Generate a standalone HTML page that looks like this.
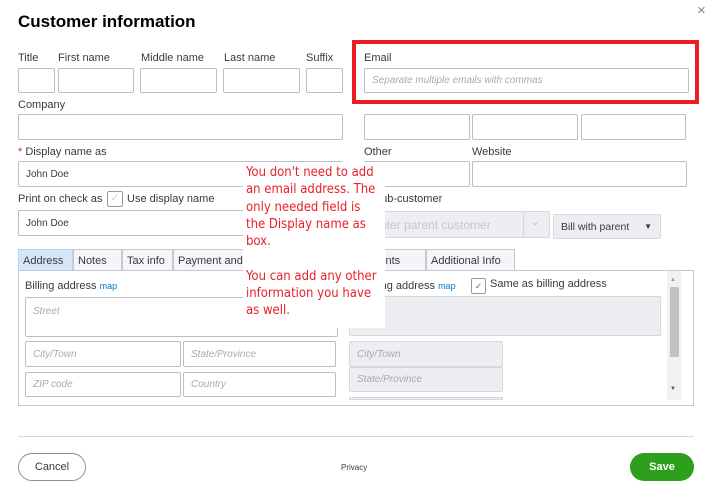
<!DOCTYPE html>
<html><head><style>
*{box-sizing:border-box;margin:0;padding:0}
body{width:710px;height:492px;background:#fff;font-family:"Liberation Sans",sans-serif;position:relative;overflow:hidden;color:#393a3d}
.a{position:absolute}
.l{position:absolute;font-size:11px;color:#393a3d;white-space:nowrap}
.i{position:absolute;border:1px solid #babec5;border-radius:2px;background:#fff;font-size:10px;color:#aaa;font-style:italic;padding:0 7px;display:flex;align-items:center;white-space:nowrap}
.g{background:#eceef1;border-color:#d4d7dc}
.t{position:absolute;top:249px;height:21px;border:1px solid #c5c8cc;border-bottom:none;background:#f4f5f8;font-size:11px;padding:5px 4px 0;color:#393a3d;white-space:nowrap;overflow:hidden}
.n{position:absolute;left:246px;font-size:13px;color:#e8202a;line-height:17.3px;font-family:"DejaVu Sans Condensed","Liberation Sans Narrow","Liberation Sans",sans-serif;white-space:nowrap}
</style></head><body>
<div class="a" style="left:18px;top:12px;font-size:17px;font-weight:bold;color:#000">Customer information</div>
<div class="a" style="left:697px;top:2px;font-size:15px;color:#888">×</div>

<div class="l" style="left:18px;top:52px">Title</div>
<div class="l" style="left:58px;top:52px">First name</div>
<div class="l" style="left:141px;top:52px">Middle name</div>
<div class="l" style="left:224px;top:52px">Last name</div>
<div class="l" style="left:306px;top:52px">Suffix</div>
<div class="i" style="left:18px;top:68px;width:37px;height:25px"></div>
<div class="i" style="left:58px;top:68px;width:76px;height:25px"></div>
<div class="i" style="left:140px;top:68px;width:77px;height:25px"></div>
<div class="i" style="left:223px;top:68px;width:77px;height:25px"></div>
<div class="i" style="left:306px;top:68px;width:37px;height:25px"></div>

<div class="l" style="left:18px;top:99px">Company</div>
<div class="i" style="left:18px;top:114px;width:325px;height:26px"></div>
<div class="l" style="left:18px;top:146px"><span style="color:#d52b1e">*</span> Display name as</div>
<div class="i" style="left:18px;top:161px;width:325px;height:26px;font-style:normal;color:#393a3d">John Doe</div>
<div class="l" style="left:18px;top:193px">Print on check as</div>
<div class="a" style="left:107px;top:191px;width:16px;height:16px;border:1px solid #999;border-radius:2px;color:#ccc;font-size:10px;text-align:center;line-height:14px">✓</div>
<div class="l" style="left:127px;top:193px">Use display name</div>
<div class="i" style="left:18px;top:210px;width:325px;height:26px;font-style:normal;color:#393a3d">John Doe</div>

<div class="a" style="left:352px;top:40px;width:347px;height:64px;border:4px solid #ed1c24"></div>
<div class="l" style="left:364px;top:52px">Email</div>
<div class="i" style="left:364px;top:68px;width:325px;height:25px">Separate multiple emails with commas</div>
<div class="i" style="left:364px;top:114px;width:106px;height:26px"></div>
<div class="i" style="left:472px;top:114px;width:106px;height:26px"></div>
<div class="i" style="left:581px;top:114px;width:105px;height:26px"></div>
<div class="l" style="left:364px;top:146px">Other</div>
<div class="l" style="left:472px;top:146px">Website</div>
<div class="i" style="left:364px;top:161px;width:106px;height:26px"></div>
<div class="i" style="left:472px;top:161px;width:215px;height:26px"></div>
<div class="l" style="left:364px;top:193px">Is sub-customer</div>
<div class="i g" style="left:364px;top:211px;width:186px;height:27px;font-style:normal;color:#c5c8cc;font-size:12px">Enter parent customer</div>
<div class="a" style="left:523px;top:212px;width:1px;height:25px;background:#d4d7dc"></div>
<div class="a" style="left:531px;top:217px;font-size:10px;color:#bbb">⌄</div>
<div class="i g" style="left:553px;top:214px;width:108px;height:25px;font-style:normal;color:#393a3d;font-size:10.5px">Bill with parent<span style="position:absolute;right:8px;font-size:8px">▼</span></div>

<div class="t" style="left:18px;width:55px;background:#d4e6f8;border-color:#b8d3ef">Address</div>
<div class="t" style="left:73px;width:49px">Notes</div>
<div class="t" style="left:122px;width:51px">Tax info</div>
<div class="t" style="left:173px;width:100px">Payment and billing</div>
<div class="t" style="left:334px;width:92px">Attachments</div>
<div class="t" style="left:426px;width:89px">Additional Info</div>
<div class="a" style="left:18px;top:270px;width:676px;height:136px;border:1px solid #c5c8cc"></div>

<div class="l" style="left:25px;top:280px">Billing address <span style="color:#0077c5;font-size:9px">map</span></div>
<div class="i" style="left:25px;top:297px;width:313px;height:40px;align-items:flex-start;padding-top:8px">Street</div>
<div class="i" style="left:25px;top:341px;width:156px;height:26px">City/Town</div>
<div class="i" style="left:183px;top:341px;width:153px;height:26px">State/Province</div>
<div class="i" style="left:25px;top:372px;width:156px;height:25px">ZIP code</div>
<div class="i" style="left:183px;top:372px;width:153px;height:25px">Country</div>

<div class="l" style="left:350px;top:280px">Shipping address <span style="color:#0077c5;font-size:9px">map</span></div>
<div class="a" style="left:471px;top:278px;width:15px;height:16px;border:1px solid #999;border-radius:2px;color:#2ca01c;font-size:9px;text-align:center;line-height:14px;background:#fff">✓</div>
<div class="l" style="left:490px;top:278px">Same as billing address</div>
<div class="i g" style="left:349px;top:296px;width:312px;height:40px"></div>
<div class="i g" style="left:349px;top:341px;width:154px;height:26px">City/Town</div>
<div class="i g" style="left:349px;top:367px;width:154px;height:25px">State/Province</div>
<div class="a" style="left:349px;top:397px;width:154px;height:3px;background:#eceef1;border:1px solid #d4d7dc"></div>
<div class="a" style="left:667px;top:271px;width:14px;height:129px;background:#f1f1f1"></div>
<div class="a" style="left:670px;top:287px;width:9px;height:70px;background:#c1c1c1"></div>
<div class="a" style="left:670px;top:277px;font-size:6px;color:#999">▲</div>
<div class="a" style="left:670px;top:386px;font-size:6px;color:#555">▼</div>

<div class="a" style="left:243px;top:162px;width:142px;height:166px;background:#fff"></div>
<div class="n" style="top:164px">You don't need to add<br>an email address. The<br>only needed field is<br>the Display name as<br>box.<br><br>You can add any other<br>information you have<br>as well.</div>

<div class="a" style="left:18px;top:436px;width:676px;height:1px;background:#d4d7dc"></div>
<div class="a" style="left:18px;top:453px;width:68px;height:28px;border:1px solid #8d9096;border-radius:14px;font-size:11px;text-align:center;line-height:26px;color:#393a3d">Cancel</div>
<div class="a" style="left:341px;top:463px;font-size:8px;color:#393a3d">Privacy</div>
<div class="a" style="left:630px;top:453px;width:64px;height:28px;background:#2ca01c;border-radius:14px;font-size:11px;font-weight:bold;text-align:center;line-height:28px;color:#fff">Save</div>
</body></html>
